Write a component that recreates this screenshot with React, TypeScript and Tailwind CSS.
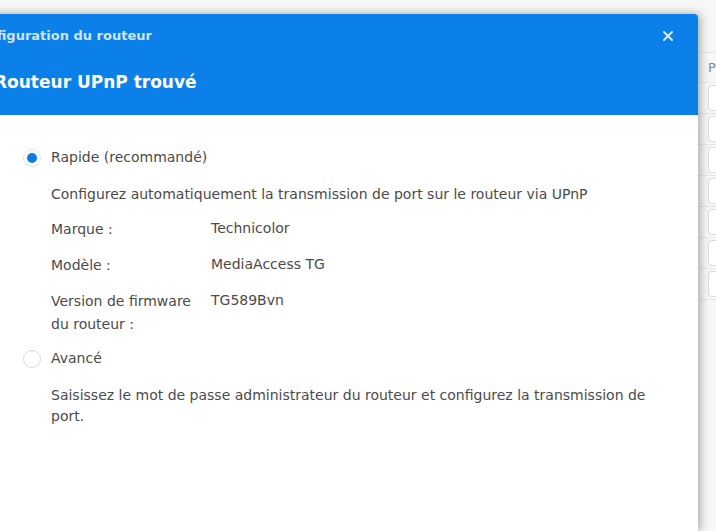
import { X } from "lucide-react";

const font = { fontFamily: '"DejaVu Sans", Verdana, sans-serif' };

const details = [
  { label: "Marque :", value: "Technicolor" },
  { label: "Modèle :", value: "MediaAccess TG" },
  { label: "Version de firmware du routeur :", value: "TG589Bvn" },
];

function Radio({ checked }: { checked?: boolean }) {
  return (
    <span
      className={`flex h-[18px] w-[18px] shrink-0 items-center justify-center rounded-full border ${
        checked ? "border-[#d7e8f8] bg-white" : "border-[#d9d9d9] bg-white"
      }`}
    >
      {checked && <span className="h-[10px] w-[10px] rounded-full bg-[#0a7ce6]" />}
    </span>
  );
}

export default function App() {
  return (
    <div
      className="flex h-[531px] w-[716px] overflow-hidden bg-[#f7f7f7]"
      style={font}
    >
      {/* dialog */}
      <div className="relative z-10 -ml-[30px] mt-[14px] flex w-[728px] shrink-0 flex-col overflow-hidden rounded-tr-[4px] bg-white shadow-[2px_0_10px_rgba(0,0,0,0.35)]">
        <div className="flex h-[101px] flex-col bg-[#0a80e8] pl-[27px] pr-[22px]">
          <div className="flex h-[42px] items-center justify-between pt-[1px]">
            <span className="-ml-[28px] text-[13px] font-bold text-[#cfe3f8]">Configuration du routeur</span>
            <X className="h-[16px] w-[16px] text-[#d8eafb]" strokeWidth={3} />
          </div>
          <div className="-ml-[3px] mt-[14px] text-[17px] font-bold text-white">Routeur UPnP trouvé</div>
        </div>

        <div className="flex flex-col pl-[53px] pt-[32px] text-[14px] text-[#4b4b4b]">
          <label className="flex items-center gap-[10px]">
            <Radio checked />
            <span>Rapide (recommandé)</span>
          </label>
          <p className="mt-[16px] pl-[28px]">
            Configurez automatiquement la transmission de port sur le routeur via UPnP
          </p>
          <div className="mt-[13px] flex flex-col gap-[13px] pl-[28px]">
            {details.map((d) => (
              <div key={d.label} className="flex leading-[23px]">
                <span className="mr-[15px] w-[145px] shrink-0">{d.label}</span>
                <span className="-mt-[1px]">{d.value}</span>
              </div>
            ))}
          </div>
          <label className="mt-[12px] flex items-center gap-[10px]">
            <Radio />
            <span>Avancé</span>
          </label>
          <p className="mt-[16px] w-[636px] pl-[28px] leading-[21px]">
            Saisissez le mot de passe administrateur du routeur et configurez la transmission de port.
          </p>
        </div>
      </div>

      {/* background table */}
      <div className="mt-[52px] flex flex-1 flex-col text-[13px] text-[#888]">
        <div className="flex h-[31px] items-center border-y border-[#e6e6e6] pl-[10px]">P</div>
        {[0, 1, 2, 3, 4, 5, 6].map((i) => (
          <div key={i} className="flex h-[31px] items-center border-b border-[#e6e6e6] pl-[10px]">
            <div className="h-[26px] w-full rounded-l-[4px] border border-r-0 border-[#dcdcdc] bg-white" />
          </div>
        ))}
      </div>
    </div>
  );
}
